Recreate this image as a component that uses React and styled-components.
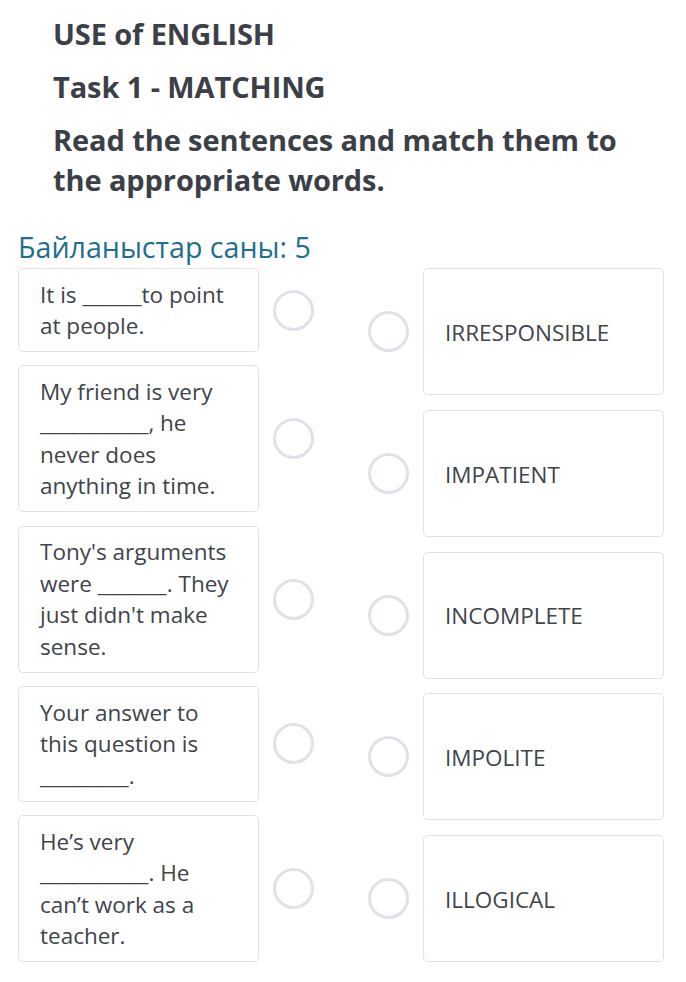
import React from "react";
import styled, { createGlobalStyle } from "styled-components";

const Global = createGlobalStyle`
  html, body { margin: 0; padding: 0; background: #ffffff; }
  body { font-family: "Open Sans", "Noto Sans", sans-serif; }
`;

const Page = styled.div`
  width: 686px;
  padding: 14px 22px 20px 18px;
  box-sizing: border-box;
`;

const Header = styled.div`
  padding-left: 35px;
  display: flex;
  flex-direction: column;
  gap: 13px;
`;

const Heading = styled.h2`
  margin: 0;
  font-size: 29px;
  line-height: 40px;
  font-weight: 700;
  color: #3b4048;
  letter-spacing: -0.1px;
`;

const Count = styled.div`
  margin-top: 29px;
  font-size: 28.6px;
  line-height: 36px;
  color: #1f6f8f;
  font-weight: 400;
`;

const Board = styled.div`
  margin-top: 3px;
  display: flex;
  justify-content: space-between;
  align-items: flex-start;
`;

const Column = styled.div`
  display: flex;
  flex-direction: column;
  gap: ${(p) => p.$gap}px;
  width: 296px;
`;

const Row = styled.div`
  display: flex;
  align-items: center;
  gap: 14px;
`;

const Card = styled.div`
  box-sizing: border-box;
  width: 241px;
  flex-shrink: 0;
  border: 1px solid #dfe2e6;
  border-radius: 5px;
  background: #fff;
  color: #40444b;
  font-size: 22.5px;
  line-height: 31.5px;
  padding: 9.5px 18px 9.5px 21px;
  ${(p) =>
    p.$answer &&
    `
    height: 127px;
    display: flex;
    align-items: center;
    padding-top: 2px;
    padding-bottom: 0;
  `}
`;

const Dot = styled.span`
  box-sizing: border-box;
  width: 41px;
  height: 41px;
  border-radius: 50%;
  border: 3px solid #dfe2e6;
  flex-shrink: 0;
`;

const questions = [
  "It is ______to point at people.",
  "My friend is very ___________, he never does anything in time.",
  "Tony's arguments were _______. They just didn't make sense.",
  "Your answer to this question is _________.",
  "He\u2019s very ___________. He can\u2019t work as a teacher.",
];

const answers = ["IRRESPONSIBLE", "IMPATIENT", "INCOMPLETE", "IMPOLITE", "ILLOGICAL"];

export default function App() {
  return (
    <Page>
      <Global />
      <Header>
        <Heading>USE of ENGLISH</Heading>
        <Heading>Task 1 - MATCHING</Heading>
        <Heading>Read the sentences and match them to the appropriate words.</Heading>
      </Header>
      <Count>Байланыстар саны: 5</Count>
      <Board>
        <Column $gap={13.4}>
          {questions.map((q) => (
            <Row key={q}>
              <Card>{q}</Card>
              <Dot />
            </Row>
          ))}
        </Column>
        <Column $gap={14.75}>
          {answers.map((a) => (
            <Row key={a}>
              <Dot />
              <Card $answer>{a}</Card>
            </Row>
          ))}
        </Column>
      </Board>
    </Page>
  );
}
